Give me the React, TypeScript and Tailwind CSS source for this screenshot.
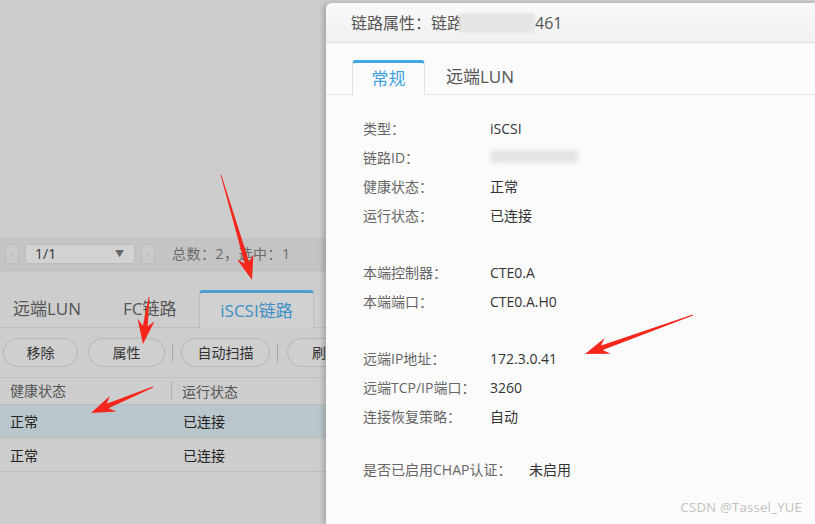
import React from 'react';

type Field = { label: string; value: React.ReactNode; gapBefore?: number; labelWidth?: string };

const fields: Field[] = [
  { label: '类型：', value: 'iSCSI' },
  {
    label: '链路ID：',
    value: <span className="inline-block w-[88px] h-[13px] mt-[3px] bg-[#e4e4e4] blur-[2px] rounded-sm" />,
  },
  { label: '健康状态：', value: '正常' },
  { label: '运行状态：', value: '已连接' },
  { label: '本端控制器：', value: 'CTE0.A', gapBefore: 28 },
  { label: '本端端口：', value: 'CTE0.A.H0' },
  { label: '远端IP地址：', value: '172.3.0.41', gapBefore: 28 },
  { label: '远端TCP/IP端口：', value: '3260' },
  { label: '连接恢复策略：', value: '自动' },
  { label: '是否已启用CHAP认证：', value: '未启用', gapBefore: 24, labelWidth: 'w-[166px]' },
];

function Arrow({ x1, y1, x2, y2 }: { x1: number; y1: number; x2: number; y2: number }) {
  const dx = x2 - x1;
  const dy = y2 - y1;
  const len = Math.hypot(dx, dy);
  const ux = dx / len;
  const uy = dy / len;
  const nx = -uy;
  const ny = ux;
  const head = 24;
  const bx = x2 - ux * head;
  const by = y2 - uy * head;
  const bx2 = x2 - ux * (head - 6);
  const by2 = y2 - uy * (head - 6);
  const p = (x: number, y: number) => `${x.toFixed(1)},${y.toFixed(1)}`;
  const pts = [
    p(x1 + nx * 0.4, y1 + ny * 0.4),
    p(bx2 + nx * 2.4, by2 + ny * 2.4),
    p(bx + nx * 8.5, by + ny * 8.5),
    p(x2, y2),
    p(bx - nx * 8.5, by - ny * 8.5),
    p(bx2 - nx * 2.4, by2 - ny * 2.4),
    p(x1 - nx * 0.4, y1 - ny * 0.4),
  ].join(' ');
  return <polygon points={pts} fill="#f5261b" />;
}

export default function App() {
  return (
    <div className="relative w-[815px] h-[524px] overflow-hidden bg-[#cdcdcd] flex font-['Open_Sans','Noto_Sans_CJK_SC',sans-serif]">
      {/* page behind the dialog, dimmed */}
      <div className="w-[326px] shrink-0 overflow-hidden flex flex-col">
        <div className="h-[238px] shrink-0" />
        <div className="h-[31px] shrink-0 bg-[#c4c4c4] flex items-center pl-[5px] gap-[6px] shadow-[0_2px_3px_rgba(0,0,0,0.08)]">
          <div className="w-[14px] h-[20px] rounded-[3px] border border-[#bcbcbc] bg-[#cbcbcb] flex items-center justify-center text-[#b4b4b4] text-[12px]">
            ‹
          </div>
          <div className="w-[110px] h-[20px] rounded-[3px] border border-[#bcbcbc] bg-[#d2d2d2] flex items-center justify-between pl-[9px] pr-[10px]">
            <span className="text-[14px] text-[#333]">1/1</span>
            <span className="text-[9px] text-[#666]">▼</span>
          </div>
          <div className="w-[14px] h-[20px] rounded-[3px] border border-[#bcbcbc] bg-[#cbcbcb] flex items-center justify-center text-[#b4b4b4] text-[12px]">
            ›
          </div>
          <span className="ml-[11px] text-[14px] text-[#6a6a6a] tracking-[0.5px]">总数：2，选中：1</span>
        </div>
        <div className="h-[21px] shrink-0" />
        <div className="h-[38px] shrink-0 flex items-end border-b border-[#bdbdbd]">
          <div className="w-[102px] h-[37px] flex items-center pl-[13px] text-[17px] text-[#555]">远端LUN</div>
          <div className="w-[97px] h-[37px] flex items-center pl-[21px] text-[17px] text-[#555]">FC链路</div>
          <div className="w-[115px] h-[38px] -mb-px rounded-t-[4px] border border-b-0 border-[#bdbdbd] border-t-[3px] border-t-[#4b9fd2] bg-[#d1d1d1] flex items-center justify-center text-[17px] text-[#3d8fc6]">
            iSCSI链路
          </div>
        </div>
        <div className="h-[50px] shrink-0 flex items-center pl-[3px] border-b border-[#c0c0c0]">
          <button className="shrink-0 w-[75px] h-[29px] rounded-full border border-[#b6b6b6] bg-[#cfcfcf] text-[14px] text-[#333]">移除</button>
          <button className="shrink-0 ml-[10px] w-[77px] h-[29px] rounded-full border border-[#b6b6b6] bg-[#cfcfcf] text-[14px] text-[#333]">属性</button>
          <div className="shrink-0 mx-[7px] w-px h-[20px] bg-[#aaa]" />
          <button className="shrink-0 ml-px w-[89px] h-[29px] rounded-full border border-[#b6b6b6] bg-[#cfcfcf] text-[14px] text-[#333]">自动扫描</button>
          <div className="shrink-0 mx-[7px] w-px h-[20px] bg-[#aaa]" />
          <button className="shrink-0 ml-[2px] w-[80px] h-[29px] rounded-full border border-[#b6b6b6] bg-[#cfcfcf] text-[14px] text-[#333] text-left pl-[24px]">刷新</button>
        </div>
        <div className="h-[27px] shrink-0 flex items-center border-b border-[#bcbcbc] text-[14px] text-[#555]">
          <div className="w-[172px] pl-[10px] border-r border-[#b0b0b0] h-[18px] leading-[18px]">健康状态</div>
          <div className="pl-[10px]">运行状态</div>
        </div>
        <div className="h-[34px] shrink-0 flex items-center bg-[#b9c6cb] border-b border-[#c2c2c2] text-[14px] text-[#222]">
          <div className="w-[172px] pl-[10px]">正常</div>
          <div className="pl-[11px]">已连接</div>
        </div>
        <div className="h-[33px] shrink-0 flex items-center border-b border-[#bdbdbd] text-[14px] text-[#222]">
          <div className="w-[172px] pl-[10px]">正常</div>
          <div className="pl-[11px]">已连接</div>
        </div>
      </div>

      {/* dialog */}
      <div className="relative flex-1 mt-[3px] rounded-tl-[6px] bg-[#fbfbfb] shadow-[-3px_0_5px_rgba(0,0,0,0.18)] flex flex-col">
        <div className="h-[40px] shrink-0 rounded-tl-[6px] bg-gradient-to-b from-[#fafafa] to-[#f0f0f0] border-b border-[#e0e0e0] flex items-center pl-[25px] text-[16px] text-[#555]">
          <span>链路属性：链路</span>
          <span className="inline-block w-[76px] h-[20px] -ml-[4px] bg-[#e6e6e6] blur-[1px]" />
          <span>461</span>
        </div>
        <div className="mt-[17px] h-[35px] shrink-0 flex items-end">
          <div className="w-[26px] border-b border-[#e6e6e6]" />
          <div className="w-[73px] h-[35px] rounded-t-[4px] border border-b-0 border-[#e3e3e3] border-t-[3px] border-t-[#3ea7e6] flex items-center justify-center text-[17px] text-[#42a2de]">
            常规
          </div>
          <div className="flex-1 h-[35px] border-b border-[#e6e6e6] flex items-center pl-[21px] text-[17px] text-[#555]">
            远端LUN
          </div>
        </div>
        <div className="mt-[19px] pl-[37px] flex flex-col">
          {fields.map((f) => (
            <div
              key={f.label}
              className="h-[29px] flex items-center text-[14px]"
              style={f.gapBefore ? { marginTop: f.gapBefore } : undefined}
            >
              <span className={`${f.labelWidth ?? 'w-[127px]'} shrink-0 whitespace-nowrap text-[#666]`}>{f.label}</span>
              <span className="text-[#333] whitespace-nowrap">{f.value}</span>
            </div>
          ))}
        </div>
        <div className="absolute right-[13px] bottom-[7px] text-[13px] text-[#c2c2c2] tracking-[0.3px]">CSDN @Tassel_YUE</div>
      </div>

      {/* red annotation arrows */}
      <svg className="absolute inset-0 pointer-events-none" width="815" height="524">
        <Arrow x1={221} y1={175} x2={252} y2={280} />
        <Arrow x1={149} y1={297} x2={143} y2={344} />
        <Arrow x1={153} y1={387} x2={91} y2={413} />
        <Arrow x1={693} y1={315} x2={585} y2={354} />
      </svg>
    </div>
  );
}
